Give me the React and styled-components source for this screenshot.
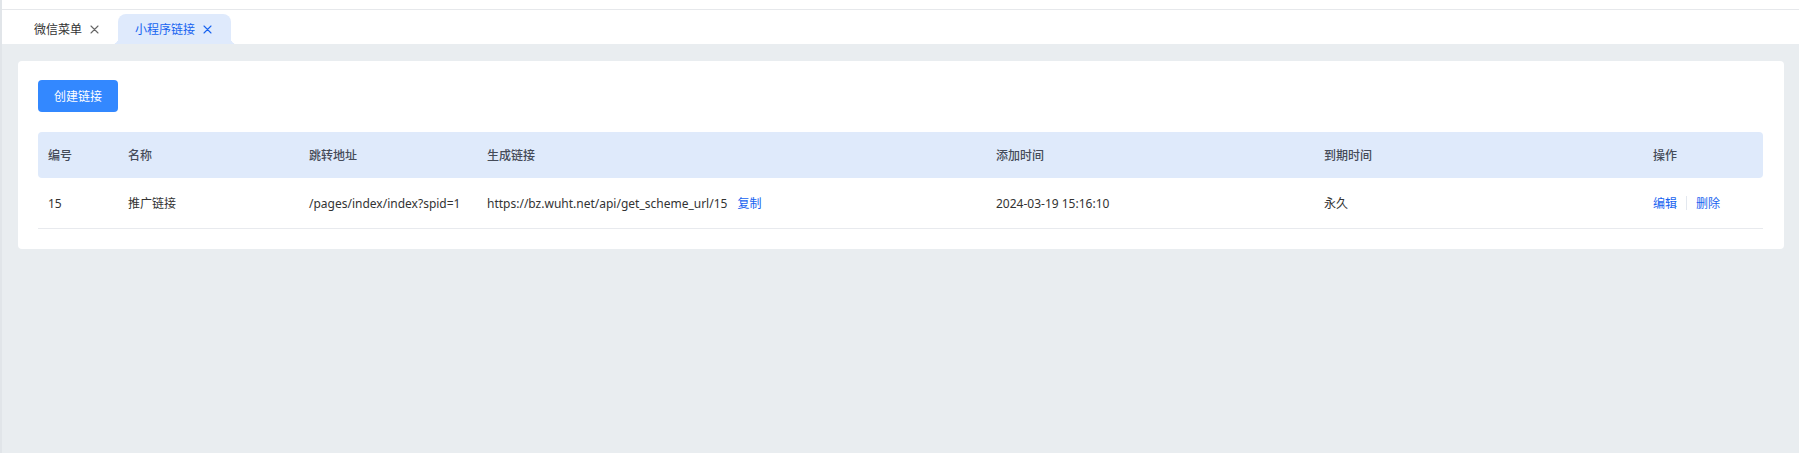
import React from 'react';
import styled, { createGlobalStyle } from 'styled-components';

const GlobalStyle = createGlobalStyle`
	html, body {
		margin: 0;
		padding: 0;
		height: 100%;
	}
	body {
		font-family: "Noto Sans", "Noto Sans CJK SC", sans-serif;
		font-size: 12px;
		color: #333;
		background: #e9edf0;
	}
`;

const Page = styled.div`
	min-height: 100vh;
	border-left: 2px solid #e1e5e9;
	box-sizing: border-box;
	background: #e9edf0;
`;

const TopStrip = styled.div`
	height: 9px;
	background: #fff;
	border-bottom: 1px solid #e6e8eb;
`;

const TabBar = styled.div`
	height: 34px;
	background: #fff;
	display: flex;
	align-items: flex-end;
	padding-left: 15px;
`;

const Tab = styled.div`
	position: relative;
	height: 30px;
	display: flex;
	align-items: center;
	gap: 8px;
	padding: 0 19px 0 17px;
	border-radius: 8px 8px 0 0;
	background: ${p => (p.$active ? '#dfeafc' : 'transparent')};
	color: ${p => (p.$active ? '#1763f0' : '#333')};
	cursor: pointer;

	&::before, &::after {
		content: '';
		display: ${p => (p.$active ? 'block' : 'none')};
		position: absolute;
		bottom: 0;
		width: 6px;
		height: 6px;
	}
	&::before {
		left: -6px;
		background: radial-gradient(circle at 0 0, transparent 6px, #dfeafc 6.5px);
	}
	&::after {
		right: -6px;
		background: radial-gradient(circle at 100% 0, transparent 6px, #dfeafc 6.5px);
	}
`;

const Close = ({ color }) => (
	<svg width="9" height="9" viewBox="0 0 9 9">
		<path d="M1 1L8 8M8 1L1 8" stroke={color} strokeWidth="1.1" strokeLinecap="round" />
	</svg>
);

const Main = styled.div`
	padding: 17px 15px 0 16px;
`;

const Card = styled.div`
	background: #fff;
	border-radius: 4px;
	padding: 19px 21px 20px 20px;
`;

const PrimaryButton = styled.button`
	width: 80px;
	height: 32px;
	border: none;
	border-radius: 4px;
	background: #3388ff;
	color: #fff;
	font: inherit;
	font-size: 12px;
	cursor: pointer;
`;

const Table = styled.div`
	margin-top: 20px;
`;

const Row = styled.div`
	display: grid;
	grid-template-columns: 80px 181px 178px 509px 328px 329px 1fr;
	height: ${p => (p.$head ? '46px' : '50px')};
	align-items: center;
	background: ${p => (p.$head ? '#dfeafb' : '#fff')};
	border-radius: ${p => (p.$head ? '4px' : '0')};
	border-bottom: ${p => (p.$head ? 'none' : '1px solid #e8eaee')};
	color: ${p => (p.$head ? '#454b58' : '#333')};
	font-weight: ${p => (p.$head ? 500 : 400)};
`;

const Cell = styled.div`
	padding: 0 10px;
	display: flex;
	align-items: center;
	white-space: nowrap;
`;

const LinkText = styled.a`
	color: #1763f0;
	cursor: pointer;
	margin-left: ${p => p.$gap || 0}px;
`;

const Divider = styled.span`
	width: 1px;
	height: 14px;
	background: #e3e8ef;
	margin: 0 9px;
`;

const columns = ['编号', '名称', '跳转地址', '生成链接', '添加时间', '到期时间', '操作'];

const rows = [
	{
		id: 15,
		name: '推广链接',
		path: '/pages/index/index?spid=1',
		url: 'https://bz.wuht.net/api/get_scheme_url/15',
		added: '2024-03-19 15:16:10',
		expire: '永久'
	}
];

export default function App() {
	return (
		<>
			<GlobalStyle />
			<Page>
				<TopStrip />
				<TabBar>
					<Tab>
						微信菜单
						<Close color="#666" />
					</Tab>
					<Tab $active>
						小程序链接
						<Close color="#1763f0" />
					</Tab>
				</TabBar>
				<Main>
					<Card>
						<PrimaryButton>创建链接</PrimaryButton>
						<Table>
							<Row $head>
								{columns.map(c => <Cell key={c}>{c}</Cell>)}
							</Row>
							{rows.map(r => (
								<Row key={r.id}>
									<Cell>{r.id}</Cell>
									<Cell>{r.name}</Cell>
									<Cell>{r.path}</Cell>
									<Cell>
										{r.url}
										<LinkText $gap={10}>复制</LinkText>
									</Cell>
									<Cell>{r.added}</Cell>
									<Cell>{r.expire}</Cell>
									<Cell>
										<LinkText>编辑</LinkText>
										<Divider />
										<LinkText>删除</LinkText>
									</Cell>
								</Row>
							))}
						</Table>
					</Card>
				</Main>
			</Page>
		</>
	);
}
